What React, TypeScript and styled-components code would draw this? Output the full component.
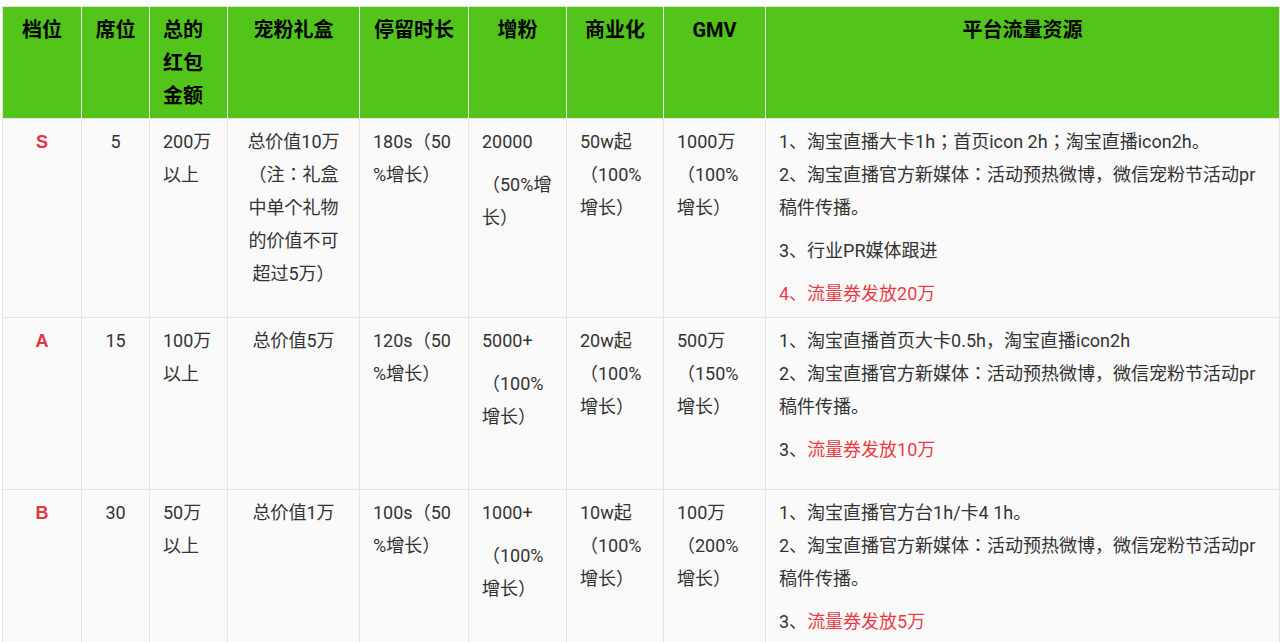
import React from 'react';
import styled, { createGlobalStyle } from 'styled-components';

const GlobalStyle = createGlobalStyle`
  html, body {
    margin: 0;
    padding: 0;
    background: #ffffff;
  }
  body {
    font-family: Roboto, "Noto Sans CJK JP", "Noto Sans CJK SC", sans-serif;
    color: #333333;
  }
`;

type Align = 'left' | 'center';

const Page = styled.div`
  padding: 6px 0 0 2px;
  overflow: hidden;
  height: 636px;
`;

const Table = styled.table`
  width: 1277px;
  table-layout: fixed;
  border-collapse: collapse;
  border: 1px solid #e4e4e4;
  background: #fafafa;
`;

const HeadCell = styled.th<{ $align: Align }>`
  background: #52c41a;
  color: #000000;
  font-family: Roboto, "Noto Sans CJK SC", sans-serif;
  font-size: 20px;
  font-weight: 700;
  line-height: 33px;
  text-align: ${({ $align }) => $align};
  vertical-align: top;
  padding: 7px 13px 5px;
  border-left: 1px solid #eef6ea;
  border-bottom: 1px solid #e4e4e4;
  &:first-child {
    border-left: none;
  }
`;

const Row = styled.tr<{ $height?: number }>`
  height: ${({ $height }) => ($height ? `${$height}px` : 'auto')};
`;

const Cell = styled.td<{ $align?: Align }>`
  font-size: 18px;
  line-height: 33px;
  color: #333333;
  text-align: ${({ $align }) => $align || 'left'};
  vertical-align: top;
  padding: 6px 13px;
  border: 1px solid #e4e4e4;
`;

const Para = styled.p`
  margin: 0 0 10px;
  &:last-child {
    margin-bottom: 0;
  }
`;

const Grade = styled.span`
  color: #e8343e;
  font-weight: 700;
  font-family: "Liberation Sans", Arial, sans-serif;
`;

const Red = styled.span`
  color: #ee3a44;
`;

interface Tier {
  grade: string;
  seats: string;
  money: string[];
  gift: string[];
  stay: string[];
  fans: string[][];
  biz: string[];
  gmv: string[];
  platform: React.ReactNode[];
  height?: number;
}

const columns: { title: string[]; width: number; align: Align }[] = [
  { title: ['档位'], width: 79, align: 'center' },
  { title: ['席位'], width: 68, align: 'center' },
  { title: ['总的', '红包', '金额'], width: 78, align: 'left' },
  { title: ['宠粉礼盒'], width: 132, align: 'center' },
  { title: ['停留时长'], width: 109, align: 'center' },
  { title: ['增粉'], width: 98, align: 'center' },
  { title: ['商业化'], width: 97, align: 'center' },
  { title: ['GMV'], width: 102, align: 'center' },
  { title: ['平台流量资源'], width: 514, align: 'center' },
];

const lines = (items: string[]) =>
  items.map((line, i) => (
    <React.Fragment key={i}>
      {i > 0 && <br />}
      {line}
    </React.Fragment>
  ));

const secondLine = '2、淘宝直播官方新媒体：活动预热微博，微信宠粉节活动pr';

const tiers: Tier[] = [
  {
    grade: 'S',
    seats: '5',
    money: ['200万', '以上'],
    gift: ['总价值10万', '（注：礼盒', '中单个礼物', '的价值不可', '超过5万）'],
    stay: ['180s（50', '%增长）'],
    fans: [['20000'], ['（50%增', '长）']],
    biz: ['50w起', '（100%', '增长）'],
    gmv: ['1000万', '（100%', '增长）'],
    platform: [
      lines(['1、淘宝直播大卡1h；首页icon 2h；淘宝直播icon2h。', secondLine, '稿件传播。']),
      '3、行业PR媒体跟进',
      <Red>4、流量券发放20万</Red>,
    ],
    height: 199,
  },
  {
    grade: 'A',
    seats: '15',
    money: ['100万', '以上'],
    gift: ['总价值5万'],
    stay: ['120s（50', '%增长）'],
    fans: [['5000+'], ['（100%', '增长）']],
    biz: ['20w起', '（100%', '增长）'],
    gmv: ['500万', '（150%', '增长）'],
    platform: [
      lines(['1、淘宝直播首页大卡0.5h，淘宝直播icon2h', secondLine, '稿件传播。']),
      <>3、<Red>流量券发放10万</Red></>,
    ],
    height: 172,
  },
  {
    grade: 'B',
    seats: '30',
    money: ['50万', '以上'],
    gift: ['总价值1万'],
    stay: ['100s（50', '%增长）'],
    fans: [['1000+'], ['（100%', '增长）']],
    biz: ['10w起', '（100%', '增长）'],
    gmv: ['100万', '（200%', '增长）'],
    platform: [
      lines(['1、淘宝直播官方台1h/卡4 1h。', secondLine, '稿件传播。']),
      <>3、<Red>流量券发放5万</Red></>,
    ],
  },
];

export default function App() {
  return (
    <Page>
      <GlobalStyle />
      <Table>
        <colgroup>
          {columns.map((c, i) => (
            <col key={i} style={{ width: c.width }} />
          ))}
        </colgroup>
        <thead>
          <tr>
            {columns.map((c, i) => (
              <HeadCell key={i} $align={c.align}>
                {lines(c.title)}
              </HeadCell>
            ))}
          </tr>
        </thead>
        <tbody>
          {tiers.map((t) => (
            <Row key={t.grade} $height={t.height}>
              <Cell $align="center">
                <Grade>{t.grade}</Grade>
              </Cell>
              <Cell $align="center">{t.seats}</Cell>
              <Cell>{lines(t.money)}</Cell>
              <Cell $align="center">{lines(t.gift)}</Cell>
              <Cell>{lines(t.stay)}</Cell>
              <Cell>
                {t.fans.map((p, i) => (
                  <Para key={i}>{lines(p)}</Para>
                ))}
              </Cell>
              <Cell>{lines(t.biz)}</Cell>
              <Cell>{lines(t.gmv)}</Cell>
              <Cell>
                {t.platform.map((p, i) => (
                  <Para key={i}>{p}</Para>
                ))}
              </Cell>
            </Row>
          ))}
        </tbody>
      </Table>
    </Page>
  );
}
